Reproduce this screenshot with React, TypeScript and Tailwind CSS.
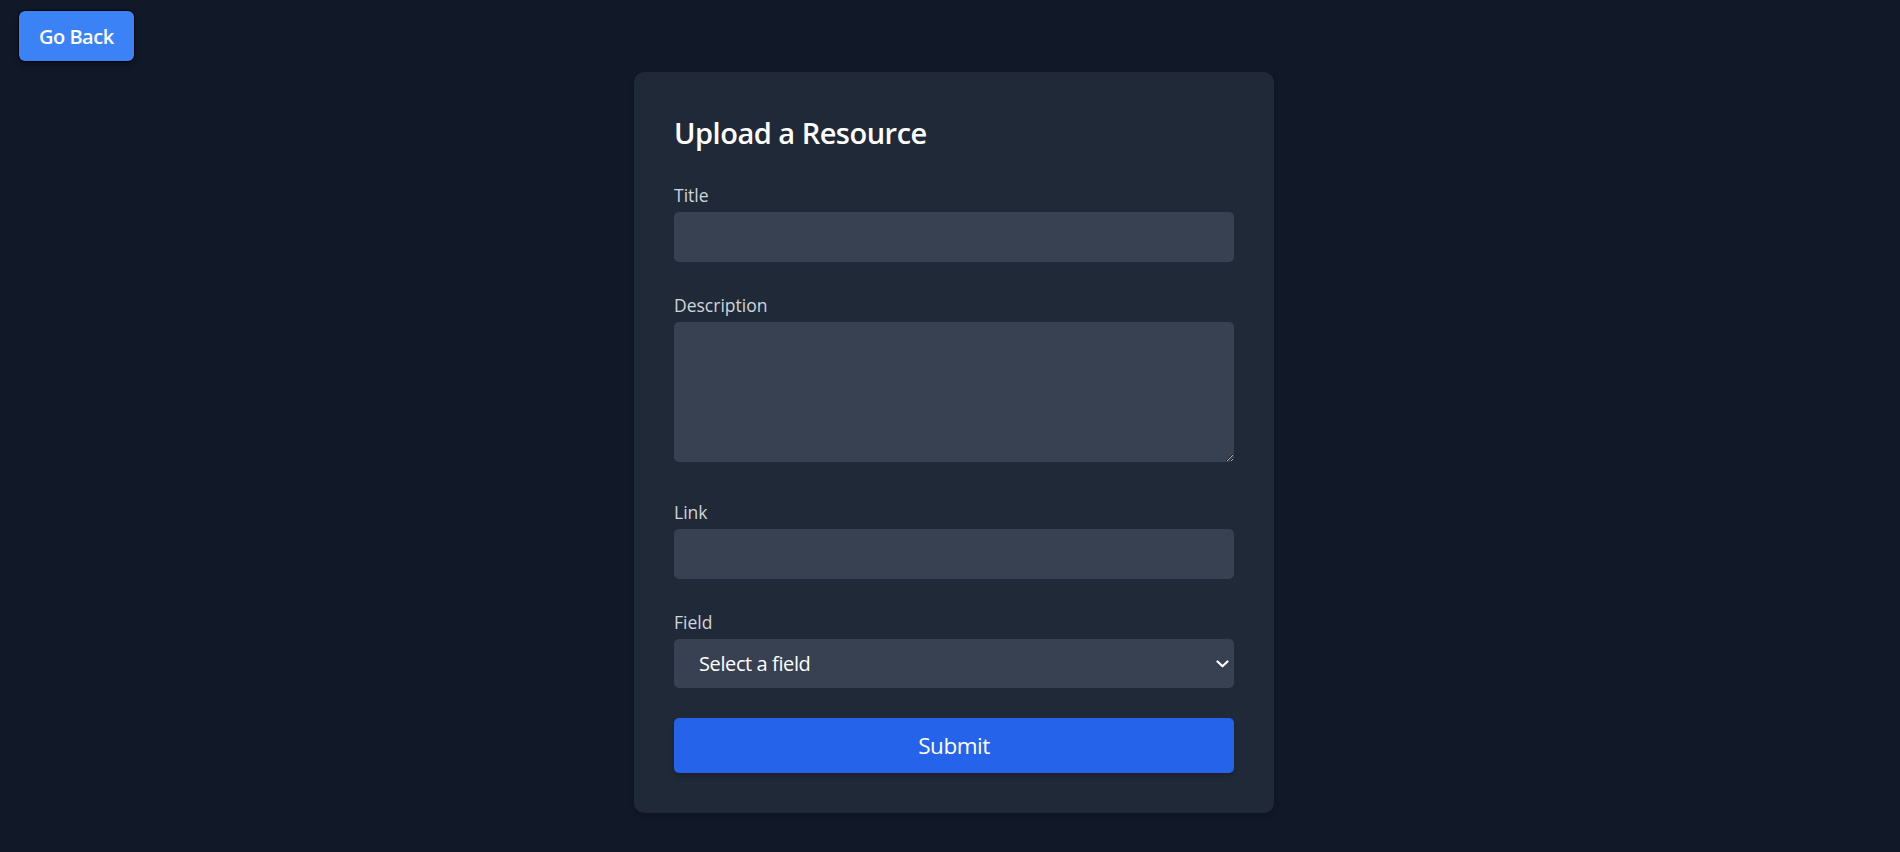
const fieldOptions = ["Computer Science", "Mathematics", "Physics", "Biology", "Chemistry"];

const Label = ({ htmlFor, text }: { htmlFor: string; text: string }) => (
  <label
    htmlFor={htmlFor}
    className="block pt-[1px] mb-[4px] text-[17.5px] leading-[25px] font-medium text-[#d1d5db]"
  >
    {text}
  </label>
);

const inputClass =
  "block w-full h-[50px] px-[10px] rounded-[5px] bg-[#374151] text-white text-[20px] outline-none";

export default function App() {
  return (
    <div
      className="min-h-screen bg-[#111827]"
      style={{ fontFamily: '"Segoe UI", "Open Sans", sans-serif' }}
    >
      <div className="pt-[11px] pl-[19px]">
        <button className="h-[50px] px-[20px] pt-[2px] rounded-[6px] bg-[#3b82f6] text-white text-[20px] font-semibold tracking-[-0.5px] shadow-[0_0_0_1px_rgba(0,0,0,0.7),0_4px_6px_rgba(0,0,0,0.3)]">
          Go Back
        </button>
      </div>

      <div className="flex justify-center pl-[8px] mt-[11px]">
        <div className="w-[640px] rounded-[10px] bg-[#1f2937] p-10 shadow-md">
          <h1 className="pt-[1px] mb-[29px] text-[29px] leading-[40px] font-semibold tracking-[-0.5px] text-white">
            Upload a Resource
          </h1>

          <form onSubmit={(e) => e.preventDefault()}>
            <div className="mb-[30px]">
              <Label htmlFor="title" text="Title" />
              <input id="title" type="text" className={inputClass} />
            </div>

            <div className="mb-[37px]">
              <Label htmlFor="description" text="Description" />
              <textarea
                id="description"
                rows={4}
                className="block w-full h-[140px] p-[10px] rounded-[5px] bg-[#374151] text-white text-[20px] outline-none"
              />
            </div>

            <div className="mb-[30px]">
              <Label htmlFor="link" text="Link" />
              <input id="link" type="url" className={inputClass} />
            </div>

            <div className="mb-[30px]">
              <Label htmlFor="field" text="Field" />
              <div className="relative">
                <select
                  id="field"
                  defaultValue=""
                  className="block w-full h-[49px] appearance-none pl-[25px] pr-10 rounded-[5px] bg-[#374151] text-white text-[20px] tracking-[-0.4px] outline-none"
                >
                  <option value="" disabled>
                    Select a field
                  </option>
                  {fieldOptions.map((f) => (
                    <option key={f} value={f}>
                      {f}
                    </option>
                  ))}
                </select>
                <svg
                  width="13"
                  height="8"
                  viewBox="0 0 13 8"
                  fill="none"
                  stroke="white"
                  strokeWidth="2.2"
                  strokeLinecap="round"
                  strokeLinejoin="round"
                  className="pointer-events-none absolute right-[5px] top-1/2 -translate-y-1/2"
                >
                  <polyline points="1.5,1.5 6.5,6.2 11.5,1.5" />
                </svg>
              </div>
            </div>

            <button
              type="submit"
              className="block w-full h-[55px] rounded-[5px] bg-[#2563eb] text-white text-[22.5px] tracking-[-0.5px] shadow-md"
            >
              Submit
            </button>
          </form>
        </div>
      </div>
    </div>
  );
}
